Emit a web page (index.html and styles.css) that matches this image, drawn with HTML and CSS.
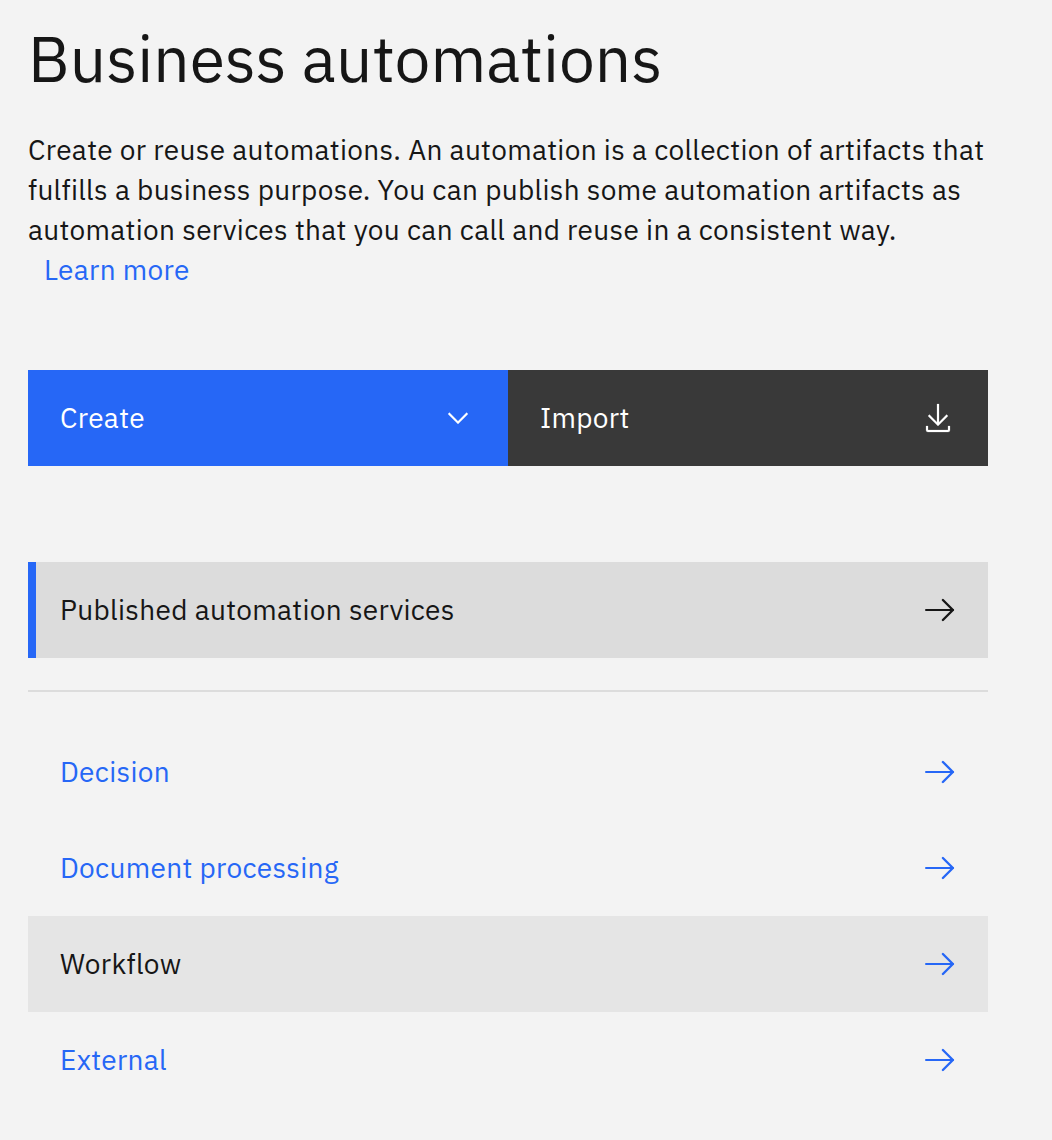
FILE: index.html
```html
<!DOCTYPE html>
<html lang="en">
<head>
<meta charset="utf-8">
<title>Business automations</title>
<link rel="stylesheet" href="styles.css">
</head>
<body>
<svg class="defs" aria-hidden="true">
  <symbol id="arrow" viewBox="0 0 32 32"><g fill="none" stroke="currentColor" stroke-linecap="round" stroke-linejoin="round"><path d="M2 16h27" stroke-width="2"/><path d="M18.9 6l10 10-10 10" stroke-width="2.4"/></g></symbol>
</svg>
<main class="page">
  <h1 class="title">Business automations</h1>
  <p class="intro">
    <span class="line">Create or reuse automations. An automation is a collection of artifacts that</span>
    <span class="line">fulfills a business purpose. You can publish some automation artifacts as</span>
    <span class="line">automation services that you can call and reuse in a consistent way.</span>
    <a class="learn">Learn more</a>
  </p>
  <div class="actions">
    <button class="action create"><span>Create</span>
      <svg viewBox="0 0 32 32"><path d="M16 22 6 12l1.4-1.4 8.6 8.6 8.6-8.6L26 12z"/></svg>
    </button>
    <button class="action import"><span>Import</span>
      <svg viewBox="0 0 32 32"><path d="M26 24v4H6v-4H4v4a2 2 0 0 0 2 2h20a2 2 0 0 0 2-2v-4zM26 14l-1.41-1.41L17 20.17V2h-2v18.17l-7.59-7.58L6 14l10 10z"/></svg>
    </button>
  </div>
  <nav class="published">
    <a class="row selected"><span>Published automation services</span><svg class="arrow"><use href="#arrow"/></svg></a>
  </nav>
  <nav class="types">
    <a class="row"><span>Decision</span><svg class="arrow"><use href="#arrow"/></svg></a>
    <a class="row"><span>Document processing</span><svg class="arrow"><use href="#arrow"/></svg></a>
    <a class="row hovered"><span>Workflow</span><svg class="arrow"><use href="#arrow"/></svg></a>
    <a class="row"><span>External</span><svg class="arrow"><use href="#arrow"/></svg></a>
  </nav>
</main>
</body>
</html>
```
FILE: styles.css
```css
* { box-sizing: border-box; }
body { margin: 0; background: #f3f3f3; color: #161616; font-family: "IBM Plex Sans", "Noto Sans", sans-serif; font-size: 28px; line-height: 40px; letter-spacing: 0.32px; }
.defs { display: none; }
.page { width: 988px; padding: 18px 0 0 28px; }
.title { margin: 0; font-size: 64px; line-height: 80px; font-weight: 400; letter-spacing: 0; white-space: nowrap; }
.intro { margin: 32px 0 0; height: 160px; }
.line { display: block; white-space: nowrap; }
.learn { display: block; width: max-content; margin-left: 16px; color: #2667f6; }
.actions { display: flex; margin-top: 80px; }
.action { display: flex; align-items: center; justify-content: space-between; width: 480px; height: 96px; padding: 0 34px 0 32px; border: 0; color: #fff; font: inherit; letter-spacing: inherit; }
.create { background: #2667f6; }
.import { background: #393939; }
.action svg { width: 32px; height: 32px; fill: currentColor; stroke: currentColor; stroke-width: 0.2; }
.published { margin-top: 96px; padding-bottom: 32px; border-bottom: 2px solid #dcdcdc; }
.types { margin-top: 32px; }
.row { display: flex; align-items: center; justify-content: space-between; height: 96px; padding: 0 32px; color: #2667f6; }
.selected { background: #dcdcdc; color: #161616; border-left: 8px solid #2667f6; padding-left: 24px; }
.hovered { background: #e5e5e5; }
.hovered span { color: #161616; }
.arrow { width: 32px; height: 32px; }
```
